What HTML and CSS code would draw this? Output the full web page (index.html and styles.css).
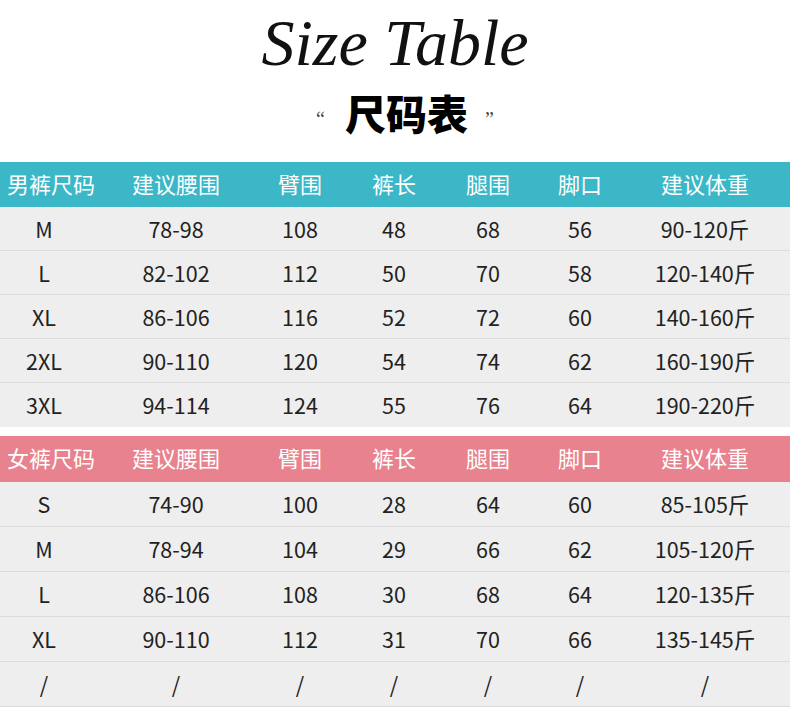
FILE: index.html
```html
<!DOCTYPE html>
<html lang="zh">
<head>
<meta charset="utf-8">
<title>Size Table</title>
<link rel="stylesheet" href="styles.css">
</head>
<body>
<header class="title">
  <h1 class="title-en">Size Table</h1>
  <div class="title-cn"><span class="quote">“</span><span class="cn">尺码表</span><span class="quote">”</span></div>
</header>

<section class="table men">
  <div class="row head">
    <div class="c first">男裤尺码</div><div class="c">建议腰围</div><div class="c">臂围</div><div class="c">裤长</div><div class="c">腿围</div><div class="c">脚口</div><div class="c">建议体重</div>
  </div>
  <div class="row"><div class="c">M</div><div class="c">78-98</div><div class="c">108</div><div class="c">48</div><div class="c">68</div><div class="c">56</div><div class="c">90-120斤</div></div>
  <div class="row"><div class="c">L</div><div class="c">82-102</div><div class="c">112</div><div class="c">50</div><div class="c">70</div><div class="c">58</div><div class="c">120-140斤</div></div>
  <div class="row"><div class="c">XL</div><div class="c">86-106</div><div class="c">116</div><div class="c">52</div><div class="c">72</div><div class="c">60</div><div class="c">140-160斤</div></div>
  <div class="row"><div class="c">2XL</div><div class="c">90-110</div><div class="c">120</div><div class="c">54</div><div class="c">74</div><div class="c">62</div><div class="c">160-190斤</div></div>
  <div class="row last"><div class="c">3XL</div><div class="c">94-114</div><div class="c">124</div><div class="c">55</div><div class="c">76</div><div class="c">64</div><div class="c">190-220斤</div></div>
</section>

<section class="table women">
  <div class="row head">
    <div class="c first">女裤尺码</div><div class="c">建议腰围</div><div class="c">臂围</div><div class="c">裤长</div><div class="c">腿围</div><div class="c">脚口</div><div class="c">建议体重</div>
  </div>
  <div class="row"><div class="c">S</div><div class="c">74-90</div><div class="c">100</div><div class="c">28</div><div class="c">64</div><div class="c">60</div><div class="c">85-105斤</div></div>
  <div class="row"><div class="c">M</div><div class="c">78-94</div><div class="c">104</div><div class="c">29</div><div class="c">66</div><div class="c">62</div><div class="c">105-120斤</div></div>
  <div class="row"><div class="c">L</div><div class="c">86-106</div><div class="c">108</div><div class="c">30</div><div class="c">68</div><div class="c">64</div><div class="c">120-135斤</div></div>
  <div class="row"><div class="c">XL</div><div class="c">90-110</div><div class="c">112</div><div class="c">31</div><div class="c">70</div><div class="c">66</div><div class="c">135-145斤</div></div>
  <div class="row last"><div class="c">/</div><div class="c">/</div><div class="c">/</div><div class="c">/</div><div class="c">/</div><div class="c">/</div><div class="c">/</div></div>
</section>
</body>
</html>
```

FILE: styles.css
```css
html, body {
  margin: 0;
  padding: 0;
  background: #ffffff;
}
body {
  width: 790px;
  font-family: "Noto Sans CJK SC", "Noto Sans", sans-serif;
  color: #222222;
}
.title {
  height: 162px;
  display: flex;
  flex-direction: column;
  align-items: center;
}
.title-en {
  margin: 0;
  padding-top: 10px;
  font-family: "Liberation Serif", "DejaVu Serif", serif;
  font-style: italic;
  font-weight: normal;
  font-size: 66px;
  line-height: 66px;
  letter-spacing: 0;
  color: #111111;
}
.title-cn {
  margin-top: 15px;
  margin-left: 20px;
  display: flex;
  align-items: center;
  height: 42px;
}
.cn {
  font-family: "Noto Sans CJK SC", sans-serif;
  font-weight: 900;
  font-size: 41px;
  line-height: 42px;
  letter-spacing: 0;
  color: #000000;
  margin: 0 17px 0 20px;
}
.quote {
  font-family: "Liberation Serif", serif;
  font-size: 20px;
  line-height: 20px;
  color: #444444;
  padding-top: 14px;
}
.table {
  background: #eeeeee;
}
.women {
  margin-top: 9px;
}
.row {
  display: grid;
  grid-template-columns: 88px 176px 72px 116px 72px 112px 138px;
  height: 44px;
  align-items: center;
  border-bottom: 1px solid #dcdcdc;
  box-sizing: border-box;
  font-size: 21.5px;
}
.women .row {
  height: 45px;
}
.row.last {
  border-bottom: none;
}
.women .row.last {
  border-bottom: 1px solid #dcdcdc;
}
.c {
  text-align: center;
  line-height: 44px;
  white-space: nowrap;
}
.row.head {
  height: 45px;
  border-bottom: none;
  color: #ffffff;
  font-size: 22px;
}
.head .c {
  line-height: 36px;
  padding-bottom: 4px;
}
.women .row.head {
  height: 46px;
}
.men .head {
  background: #3bb7c8;
}
.women .head {
  background: #e8828e;
}
.head .c.first {
  text-align: left;
  padding-left: 7px;
}
```
